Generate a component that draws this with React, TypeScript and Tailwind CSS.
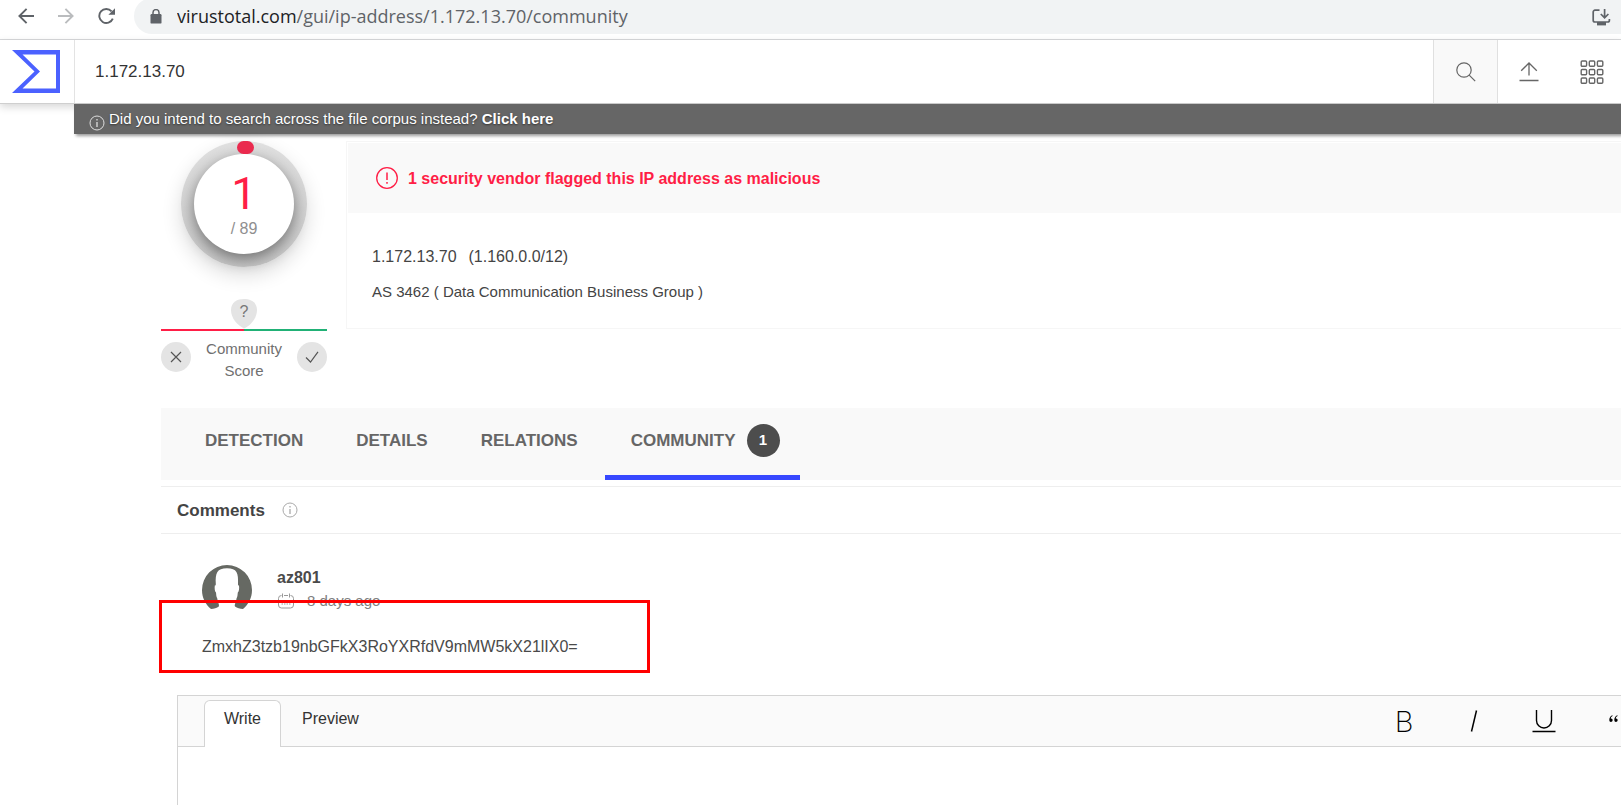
import React from "react";

function InfoIcon({ className }: { className: string }) {
  return (
    <svg viewBox="0 0 16 16" fill="none" stroke="currentColor" className={className} aria-hidden="true">
      <circle cx="8" cy="8" r="7" />
      <path d="M8 7v5M8 4v1.6" strokeWidth="1.3" />
    </svg>
  );
}

function BrowserBar() {
  return (
    <div className="flex h-10 shrink-0 overflow-hidden border-b border-[#d8d9db] bg-white">
      <div className="flex h-8 w-[134px] shrink-0 items-center gap-6 pl-[18px] text-[#5f6368]">
        <button aria-label="Back" className="h-4 w-4">
          <svg viewBox="0 0 16 16" fill="none" stroke="currentColor" strokeWidth="1.9" className="h-4 w-4">
            <path d="M16 8H1.6M8.6 .8 1.4 8l7.2 7.2" />
          </svg>
        </button>
        <button aria-label="Forward" className="h-4 w-4 text-[#babcbe]">
          <svg viewBox="0 0 16 16" fill="none" stroke="currentColor" strokeWidth="1.9" className="h-4 w-4">
            <path d="M0 8h14.4M7.4 .8 14.6 8l-7.2 7.2" />
          </svg>
        </button>
        <button aria-label="Reload" className="h-4 w-[17px]">
          <svg viewBox="0 0 17 16" fill="none" stroke="currentColor" strokeWidth="1.9" className="h-4 w-[17px]">
            <path d="M14.8 10.6A7 7 0 1 1 13.6 3.4" />
            <path d="M17 .2v6.6h-6.6z" fill="currentColor" stroke="none" />
          </svg>
        </button>
      </div>
      <div className="-mt-0.5 flex h-9 min-w-0 flex-1 items-center rounded-l-full bg-[#f1f3f4] pl-4 pr-[10px]">
        <svg viewBox="0 0 12 15" className="h-[15px] w-3 shrink-0 text-[#5f6368]" aria-hidden="true">
          <rect x=".5" y="5" width="11" height="9.6" rx="1.2" fill="currentColor" />
          <path d="M3 6V3.600a3 3 0 0 1 6 0V6" fill="none" stroke="currentColor" strokeWidth="1.5" />
        </svg>
        <div className="ml-[15px] flex-1 truncate font-['Open_Sans','Noto_Sans',sans-serif] text-[18px] leading-7 text-[#5f6368]">
          <span className="text-[#202124]">virustotal.com</span>/gui/ip-address/1.172.13.70/community
        </div>
        <button aria-label="Install app" className="mt-0.5 h-[17px] w-[19px]">
          <svg viewBox="0 0 19 17" fill="none" stroke="#5f6368" strokeWidth="1.7" className="h-[17px] w-[19px]">
            <path d="M7.500 1.200H3A1.800 1.800 0 0 0 1.200 3v8.200A1.800 1.800 0 0 0 3 13h12.600a1.800 1.800 0 0 0 1.800-1.800V10" />
            <path d="M12.600 0v8.400M8.800 5l3.800 3.800L16.400 5" />
            <path d="M5 13h9v3.400H5z" fill="#5f6368" stroke="none" />
          </svg>
        </button>
      </div>
    </div>
  );
}

function TopBar() {
  const cells = [0, 1, 2];
  return (
    <header className="flex h-16 shrink-0 border-b border-[#cfcfcf] bg-white shadow-[0_3px_8px_rgba(0,0,0,0.16)]">
      <a href="#home" aria-label="VirusTotal" className="flex w-[75px] shrink-0 items-center border-r border-[#e3e3e3] pl-3">
        <svg viewBox="0 0 48 43" className="h-[43px] w-12">
          <path
            fill="#4b61ff"
            fillRule="evenodd"
            d="M0 0h48v43H0l22.500-21.500zM10.500 4.500 28 21.500 10.500 38.500H44v-34z"
          />
        </svg>
      </a>
      <input
        aria-label="Search"
        defaultValue="1.172.13.70"
        className="min-w-0 flex-1 bg-transparent pl-5 text-[17px] text-[#333] outline-none"
      />
      <button aria-label="Run search" className="flex w-[65px] items-center justify-center border-x border-[#e0e0e0] bg-[#f9f9f9]">
        <svg viewBox="0 0 20 20" fill="none" stroke="#666" strokeWidth="1.2" className="h-5 w-5">
          <circle cx="8" cy="8" r="7.2" />
          <path d="m13.200 13.200 6 6" />
        </svg>
      </button>
      <button aria-label="Upload" className="flex w-[62px] items-center justify-center">
        <svg viewBox="0 0 20 20" fill="none" stroke="#666" strokeWidth="1.3" className="h-5 w-5">
          <path d="M10 13.500V1M2.200 8.800 10 1l7.800 7.800M.5 18.500h19" />
        </svg>
      </button>
      <button aria-label="Apps" className="flex w-[61px] items-center justify-center pl-0.5">
        <svg viewBox="0 0 24 24" fill="none" stroke="#666" strokeWidth="1.4" className="h-6 w-6">
          {cells.map((r) =>
            cells.map((c) => <rect key={`${r}${c}`} x={1.2 + c * 8.1} y={1 + r * 8.5} width="5.4" height="5.2" rx="1" />)
          )}
        </svg>
      </button>
    </header>
  );
}

function Score() {
  return (
    <div className="flex w-[166px] shrink-0 flex-col items-center">
      <div className="relative flex h-[126px] w-[126px] items-center justify-center rounded-full bg-linear-to-b from-[#e0e0e0] to-[#c8c8c8] shadow-[0_8px_20px_rgba(0,0,0,0.14)]">
        <div className="flex h-[100px] w-[100px] flex-col items-center rounded-full bg-white pt-5 shadow-[0_5px_15px_rgba(0,0,0,0.45)]">
          <div className="font-['Roboto',sans-serif] text-[45px] leading-10 text-[#ff1e46]">1</div>
          <div className="mt-[5px] text-[16px] leading-5 text-[#8f8f8f]">/ 89</div>
        </div>
        <div className="absolute left-14 top-0 h-[13px] w-[17px] rounded-full bg-[#ea2a4e]" />
      </div>
      <div className="relative mt-8 h-[30px] w-[26px]">
        <svg viewBox="0 0 26 30" className="h-[30px] w-[26px]" aria-hidden="true">
          <path d="M13 0C19.500 0 26 3 26 11c0 8-6 15-13 18.600C6 26 0 19 0 11 0 3 6.500 0 13 0z" fill="#e4e4e4" />
        </svg>
        <span className="absolute inset-x-0 top-[3px] text-center text-[16px] leading-5 text-[#777]">?</span>
      </div>
      <div className="flex h-0.5 w-full">
        <div className="flex-1 bg-[#ff1e46]" />
        <div className="flex-1 bg-[#21b176]" />
      </div>
      <div className="flex w-full items-start justify-between pt-[11px]">
        <button aria-label="Vote malicious" className="flex h-[30px] w-[30px] items-center justify-center rounded-full bg-[#e4e4e4]">
          <svg viewBox="0 0 12 12" fill="none" stroke="#555" strokeWidth="1.2" className="h-3 w-3">
            <path d="m1 1 10 10M11 1 1 11" />
          </svg>
        </button>
        <div className="-mt-1 text-center text-[15px] leading-[22px] text-[#707070]">
          Community
          <br />
          Score
        </div>
        <button aria-label="Vote harmless" className="flex h-[30px] w-[30px] items-center justify-center rounded-full bg-[#e4e4e4]">
          <svg viewBox="0 0 14 12" fill="none" stroke="#555" strokeWidth="1.2" className="h-3 w-3.5">
            <path d="m1 6.500 4.500 4.500L13 .8" />
          </svg>
        </button>
      </div>
    </div>
  );
}

function Summary() {
  return (
    <section className="flex h-[188px] flex-1 flex-col border border-r-0 border-[#f6f6f6] pl-px pt-px">
      <div className="flex h-[70px] items-center gap-[10px] bg-[#f9f9f9] pl-7 text-[#ff1e46]">
        <svg viewBox="0 0 22 22" fill="none" stroke="currentColor" strokeWidth="1.3" className="h-[22px] w-[22px]" aria-hidden="true">
          <circle cx="11" cy="11" r="10.3" />
          <path d="M11 5.500v7.500M11 15v1.800" strokeWidth="1.5" />
        </svg>
        <h1 className="pt-0.5 text-[16px] font-bold">1 security vendor flagged this IP address as malicious</h1>
      </div>
      <div className="pl-6 pt-8 text-[#444]">
        <p className="text-[16px] leading-6">
          <span>1.172.13.70</span>
          <span className="ml-3">(1.160.0.0/12)</span>
        </p>
        <p className="mt-[11px] text-[15px] leading-6">AS 3462 ( Data Communication Business Group )</p>
      </div>
    </section>
  );
}

function Tabs() {
  const plain = ["DETECTION", "DETAILS", "RELATIONS"];
  return (
    <nav className="flex h-[72px] gap-px bg-[#f9f9f9] pl-[18px] text-[17px] font-bold text-[#666]">
      {plain.map((t) => (
        <a key={t} href={`#${t.toLowerCase()}`} className="flex items-center px-[26px] pb-1.5">
          {t}
        </a>
      ))}
      <a href="#community" className="flex items-center border-b-[5px] border-[#3748ff] pb-0.5 pl-[26px] pr-5">
        COMMUNITY
        <span className="ml-[11px] flex h-[33px] w-[33px] items-center justify-center rounded-full bg-[#4d4d4d] text-[15px] text-white">
          1
        </span>
      </a>
    </nav>
  );
}

function Comment() {
  return (
    <article className="relative pl-[41px] pt-[31px] text-[#4a4a4a]">
      <div className="flex gap-[25px]">
        <svg viewBox="0 0 50 50" className="h-[50px] w-[50px] shrink-0" aria-hidden="true">
          <path
            fill="#666963"
            d="M9 44C3.500 39.500 0 33 0 25a25 25 0 0 1 50 0c0 8-3.500 14.500-9 19-3 0-6-1-8-2.500-.8-2 1-4 1.500-8 1.200-2 1-4 1.300-6 1.200-1 1.600-4 1.200-7-.8 0-1-.2-1-1.500C36.500 8 35 3.200 25 3.200S13.200 8 13.800 19c0 1.300-.2 1.500-1 1.500-.4 3 0 6 1.200 7 .3 2 .1 4 1.300 6 .5 4 2.300 6 1.500 8C15 43 12 44 9 44z"
          />
        </svg>
        <div className="pt-px">
          <a href="#az801" className="block text-[16px] font-bold leading-6">az801</a>
          <div className="flex items-center gap-3 text-[15px] leading-[22px] text-[#808080]">
            <svg viewBox="0 0 18 18" fill="none" stroke="#999" className="h-[18px] w-[18px]" aria-hidden="true">
              <path d="M4.500 3.500a3 3 0 0 0-3 3V13a3 3 0 0 0 3 3h9a3 3 0 0 0 3-3V6.500a3 3 0 0 0-3-3M7 3.500h4" />
              <path d="M5.500 1.500v4M12.500 1.500v4" />
              <path d="M4.500 8.500h9M4.500 12h9" strokeDasharray="1.500 1" />
            </svg>
            <span>8 days ago</span>
          </div>
        </div>
      </div>
      <p className="mt-5 text-[16px] leading-6">ZmxhZ3tzb19nbGFkX3RoYXRfdV9mMW5kX21lIX0=</p>
      <div className="pointer-events-none absolute -left-0.5 top-[66px] h-[73px] w-[491px] border-[3px] border-[#ff0000]" />
    </article>
  );
}

function Editor() {
  return (
    <section className="ml-4 mt-[36px] flex flex-1 flex-col border-l border-t border-[#d4d4d4]">
      <div className="flex h-[51px] border-b border-[#d4d4d4] bg-[#fafafa] pl-[26px] pt-1">
        <button className="-mb-px flex w-[77px] justify-center rounded-t-md border border-b-0 border-[#d4d4d4] bg-white pt-1.5 text-[16px] leading-6 text-[#333]">
          Write
        </button>
        <button className="flex items-start px-[21px] pt-[7px] text-[16px] leading-6 text-[#333]">Preview</button>
        <div className="ml-auto flex items-center pb-1 font-['Inter',sans-serif] text-[29px] leading-none text-black">
          <button aria-label="Bold" className="w-[70px] text-center font-extralight">B</button>
          <button aria-label="Italic" className="flex w-[70px] justify-center">
            <svg viewBox="0 0 8 22" fill="none" stroke="currentColor" strokeWidth="1.5" className="h-[22px] w-2">
              <path d="M6.500.5l-5 21" />
            </svg>
          </button>
          <button aria-label="Underline" className="flex w-[70px] justify-center">
            <svg viewBox="0 0 24 24" fill="none" stroke="currentColor" strokeWidth="1.4" className="h-6 w-6">
              <path d="M4.500 1v10.500a7.500 7.500 0 0 0 15 0V1M.5 22.500h23" />
            </svg>
          </button>
          <button aria-label="Quote" className="flex w-[42px] justify-end pb-1 pr-[3px]">
            <svg viewBox="0 0 9 8" className="h-2 w-[9px]" fill="currentColor">
              <path d="M3.400.2C1.200 1 .3 2.800.3 5.200a1.700 1.700 0 1 0 1.500-1.700c0-1.200.6-2 1.800-2.600zM8.400.2C6.200 1 5.300 2.800 5.300 5.200a1.700 1.700 0 1 0 1.500-1.700c0-1.200.6-2 1.800-2.600z" />
            </svg>
          </button>
        </div>
      </div>
      <textarea aria-label="Comment" className="w-full flex-1 resize-none p-4 text-[16px] outline-none" />
    </section>
  );
}

export default function App() {
  return (
    <div className="flex min-h-screen flex-col overflow-x-hidden bg-white font-['Liberation_Sans',Arial,sans-serif]">
      <BrowserBar />
      <TopBar />
      <div className="relative ml-[74px] flex h-[30px] shrink-0 items-center bg-[#666] pl-[15px] text-[15px] text-white shadow-[2px_2px_3px_rgba(0,0,0,0.4)]">
        <InfoIcon className="mt-2 h-4 w-4 text-[#ddd]" />
        <p className="ml-1 [text-shadow:0_1px_2px_rgba(0,0,0,0.5)]">
          Did you intend to search across the file corpus instead?{" "}
          <a href="#search" className="font-bold">Click here</a>
        </p>
      </div>
      <main className="flex flex-1 flex-col pl-[161px] pt-[7px]">
        <div className="flex h-[267px] gap-[19px]">
          <Score />
          <Summary />
        </div>
        <Tabs />
        <div className="mt-1.5 flex h-12 items-center gap-[17px] border-y border-[#eee] pl-4">
          <h2 className="pt-px text-[17px] font-bold text-[#444]">Comments</h2>
          <InfoIcon className="h-4 w-4 text-[#aaa]" />
        </div>
        <Comment />
        <Editor />
      </main>
    </div>
  );
}
